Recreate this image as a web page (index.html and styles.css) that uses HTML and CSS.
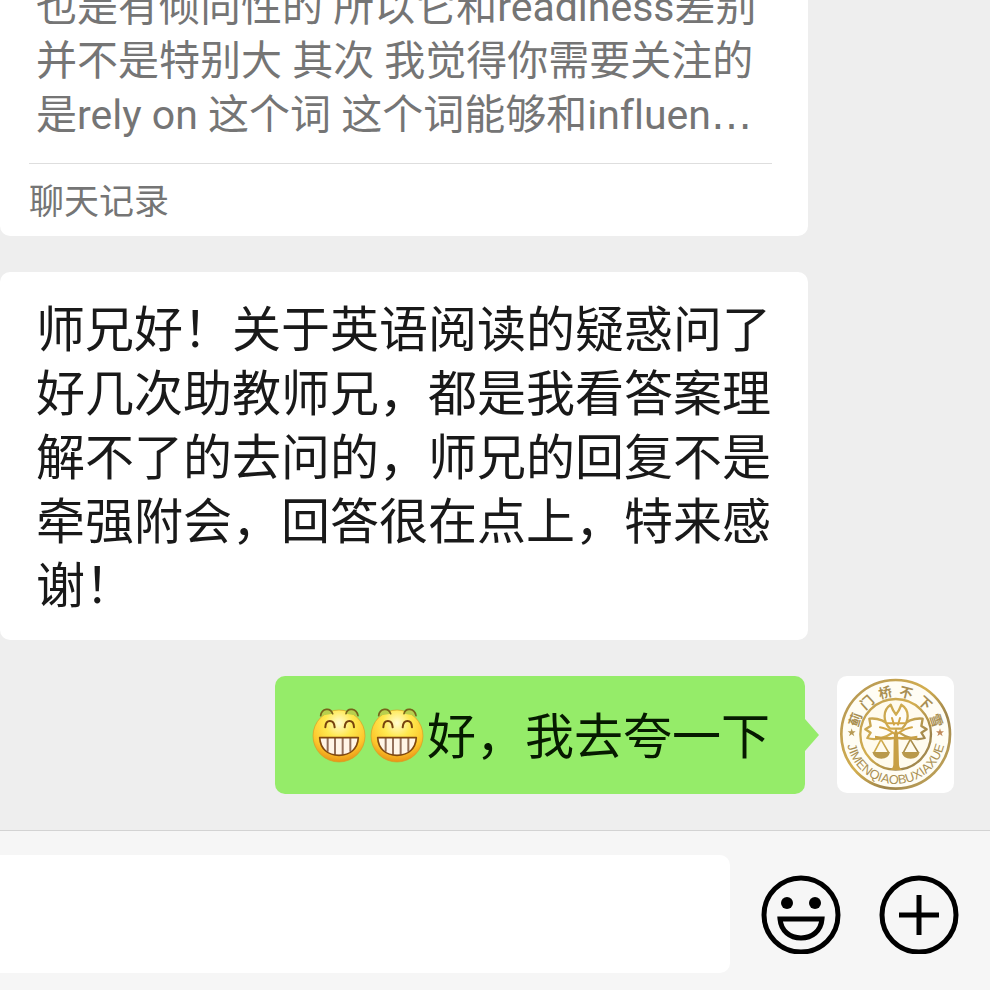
FILE: index.html
```html
<!DOCTYPE html>
<html lang="zh-CN">
<head>
    <meta charset="UTF-8">
    <meta name="viewport" content="width=device-width, initial-scale=1.0">
    <title>聊天</title>
    <link rel="stylesheet" href="styles.css">
</head>
<body>
    <!-- 表情图形，供消息里复用 -->
    <svg class="defs" aria-hidden="true">
        <defs>
            <radialGradient id="face" cx="0.5" cy="0.25" r="0.78">
                <stop offset="0" stop-color="#fffbd0"/>
                <stop offset="0.35" stop-color="#ffe94f"/>
                <stop offset="0.72" stop-color="#fdc62c"/>
                <stop offset="1" stop-color="#e58a12"/>
            </radialGradient>
            <symbol id="grin" viewBox="33 49 174 174">
                <circle cx="117" cy="139" r="78" fill="url(#face)" stroke="#d99b22" stroke-width="2"/>
                <g fill="none" stroke="#77631a" stroke-width="5" stroke-linecap="round">
                    <path d="M62 78C65 56 91 52 98 72" fill="#b9cf4d"/>
                    <path d="M138 72C143 52 170 56 174 78" fill="#b9cf4d"/>
                </g>
                <g fill="none" stroke="#76420d" stroke-width="6" stroke-linecap="round">
                    <path d="M76 113C77 88 102 88 104 113"/>
                    <path d="M134 113C136 88 161 88 162 113"/>
                </g>
                <path d="M59 144H175C173 178 150 197 117 197S61 178 59 144Z" fill="#fff5e6"/>
                <path d="M83 145V186M105 145V196M128 145V196M151 145V186" fill="none" stroke="#93705a" stroke-width="6"/>
                <path d="M59 144H175C173 178 150 197 117 197S61 178 59 144Z" fill="none" stroke="#80480f" stroke-width="5" stroke-linejoin="round"/>
            </symbol>
        </defs>
    </svg>

    <main class="chat">
        <section class="card record">
            <p class="record-text">也是有倾向性的 所以它和readiness差别并不是特别大 其次 我觉得你需要关注的是rely on 这个词 这个词能够和influen<span class="dots">…</span></p>
            <div class="record-type">聊天记录</div>
        </section>

        <p class="card message">师兄好！关于英语阅读的疑惑问了好几次助教师兄，都是我看答案理解不了的去问的，师兄的回复不是牵强附会，回答很在点上，特来感谢！</p>

        <div class="mine">
            <p class="bubble">
                <svg class="emoji" role="img" aria-label="呲牙"><use href="#grin"/></svg>
                <svg class="emoji" role="img" aria-label="呲牙"><use href="#grin"/></svg>
                <span class="bubble-text">好，我去夸一下</span>
            </p>
            <svg class="avatar" viewBox="21 18 351 351" role="img" aria-label="头像">
                <defs>
                    <linearGradient id="gold" gradientUnits="userSpaceOnUse" x1="40" y1="60" x2="350" y2="330">
                        <stop offset="0" stop-color="#b39655"/>
                        <stop offset="0.45" stop-color="#d3ae4f"/>
                        <stop offset="0.7" stop-color="#9c834c"/>
                        <stop offset="1" stop-color="#c9ab5c"/>
                    </linearGradient>
                    <path id="ring" d="M48 193A149 149 0 0 0 346 193"/>
                </defs>
                <circle cx="197" cy="193" r="163" fill="#fffdf4" stroke="url(#gold)" stroke-width="8"/>
                <circle cx="197" cy="193" r="106" fill="#fffbee" stroke="url(#gold)" stroke-width="7"/>
                <g class="seal-cn">
                    <text x="197" y="79" transform="rotate(-70 197 193)">蓟</text>
                    <text x="197" y="79" transform="rotate(-42 197 193)">门</text>
                    <text x="197" y="79" transform="rotate(-14 197 193)">桥</text>
                    <text x="197" y="79" transform="rotate(14 197 193)">不</text>
                    <text x="197" y="79" transform="rotate(43 197 193)">下</text>
                    <text x="197" y="79" transform="rotate(71 197 193)">雪</text>
                </g>
                <text class="seal-en"><textPath href="#ring" startOffset="50%">JIMENQIAOBUXIAXUE</textPath></text>
                <path d="M65 175L68 184H77L70 190L73 199L65 193L57 199L60 190L53 184H62Z" fill="#b79a55"/>
                <path d="M330 175L333 184H342L335 190L338 199L330 193L322 199L325 190L318 184H327Z" fill="#c0895a"/>
                <g fill="#fffdf6" stroke="url(#gold)" stroke-width="7" stroke-linejoin="round">
                    <path d="M180 168C158 146 138 144 118 146L122 168L106 178L122 188L112 204C136 212 166 204 188 188"/>
                    <path d="M216 168C238 146 258 144 278 146L274 168L290 178L274 188L284 204C260 212 230 204 208 188"/>
                    <path d="M180 176C158 154 158 120 182 104L190 122L198 134L206 122L214 104C240 120 238 154 216 176Z"/>
                </g>
                <g fill="none" stroke="#d2a646" stroke-width="6" stroke-linecap="round">
                    <path d="M150 172C166 174 180 182 192 190M246 172C230 174 216 182 204 190M186 144L192 164M210 144L204 164M172 160H224"/>
                </g>
                <path d="M135 197Q166 203 192 200V190L198 174L204 190V200Q230 203 262 197V206Q230 212 205 208L207 284Q208 296 218 300H179Q189 296 190 284L191 208Q165 212 135 206Z" fill="#c8a045"/>
                <g fill="none" stroke="url(#gold)" stroke-width="5" stroke-linejoin="round">
                    <path d="M153 208L132 248M153 208L176 248"/>
                    <path d="M241 208L220 248M241 208L265 248"/>
                </g>
                <path d="M127 246H180Q176 266 154 266T127 246ZM215 246H269Q265 266 242 266T215 246Z" fill="#b9994c"/>
            </svg>
        </div>
    </main>

    <form class="toolbar">
        <input class="entry" type="text" aria-label="输入消息">
        <button class="tool" type="button" aria-label="表情">
            <svg viewBox="0 0 80 80">
                <circle cx="40" cy="41" r="37" fill="none" stroke="#000" stroke-width="5"/>
                <circle cx="26" cy="29" r="6"/>
                <circle cx="54" cy="29" r="6"/>
                <path d="M19 45H61C60 57 51 64 40 64S20 57 19 45Z" fill="none" stroke="#000" stroke-width="5"/>
            </svg>
        </button>
        <button class="tool" type="button" aria-label="更多">
            <svg viewBox="0 0 80 80">
                <circle cx="40" cy="41" r="37" fill="none" stroke="#000" stroke-width="5"/>
                <path d="M40 21V61M20 41H60" fill="none" stroke="#000" stroke-width="5"/>
            </svg>
        </button>
    </form>
</body>
</html>
```

FILE: styles.css
```css
* {
    margin: 0;
    padding: 0;
    box-sizing: border-box;
}
body {
    height: 100vh;
    display: flex;
    flex-direction: column;
    overflow: hidden;
    background-color: #eee;
    font-family: "Noto Sans CJK SC", sans-serif;
}
.defs {
    position: absolute;
    width: 0;
    height: 0;
}
/* 消息从底部往上排，超出的部分在顶部被裁掉 */
.chat {
    flex: 1;
    min-height: 0;
    display: flex;
    flex-direction: column;
    justify-content: flex-end;
    gap: 36px;
    padding-bottom: 36px;
    overflow: hidden;
}
.card {
    flex-shrink: 0;
    margin-right: 182px;
    border-radius: 10px;
    background-color: #fff;
}
.record {
    padding: 0 36px 0 29px;
    color: #757575;
}
.record-text {
    padding: 0 0 21px 7px;
    font-family: Roboto, "Noto Sans CJK SC", sans-serif;
    font-size: 41px;
    font-variant-ligatures: none;
    line-height: 54px;
}
.dots {
    font-family: "DejaVu Sans", sans-serif;
}
.record-type {
    padding-bottom: 3px;
    border-top: 1px solid #dedede;
    font-size: 35px;
    line-height: 69px;
}
.message {
    padding: 22px 36px 26px;
    color: #191919;
    font-size: 49px;
    line-height: 64px;
}
.mine {
    flex-shrink: 0;
    display: flex;
    justify-content: flex-end;
    gap: 32px;
    padding-right: 36px;
}
.bubble {
    position: relative;
    display: flex;
    align-items: center;
    min-height: 118px;
    padding: 24px 35px 24px 36px;
    border-radius: 10px;
    background-color: #95ec69;
    color: #061a00;
    font-size: 49px;
    line-height: 64px;
}
.bubble::after {
    content: "";
    position: absolute;
    left: 100%;
    top: 50%;
    margin-top: -16px;
    border: 16px solid transparent;
    border-left: 14px solid #95ec69;
    border-right: 0;
}
.bubble-text {
    padding-bottom: 4px;
}
.emoji {
    width: 58px;
    height: 58px;
}
.avatar {
    width: 117px;
    height: 117px;
    border-radius: 10px;
    background-color: #fff;
}
.seal-cn {
    fill: #a98f52;
    font-size: 40px;
    font-weight: bold;
    text-anchor: middle;
}
.seal-en {
    fill: #a98f52;
    font-family: "Liberation Sans", sans-serif;
    font-size: 38px;
    text-anchor: middle;
}
.toolbar {
    flex-shrink: 0;
    display: flex;
    align-items: center;
    padding: 24px 31px 17px 0;
    border-top: 1px solid #d3d3d3;
    background-color: #f6f6f6;
}
.entry {
    flex: 1;
    min-width: 0;
    height: 118px;
    padding: 0 36px;
    border: 0;
    border-radius: 0 10px 10px 0;
    outline: 0;
    background-color: #fff;
    font: inherit;
    font-size: 49px;
}
.tool {
    width: 80px;
    height: 80px;
    border: 0;
    background: none;
    cursor: pointer;
}
.tool svg {
    display: block;
}
.entry + .tool {
    margin: 0 38px 0 31px;
}
```
